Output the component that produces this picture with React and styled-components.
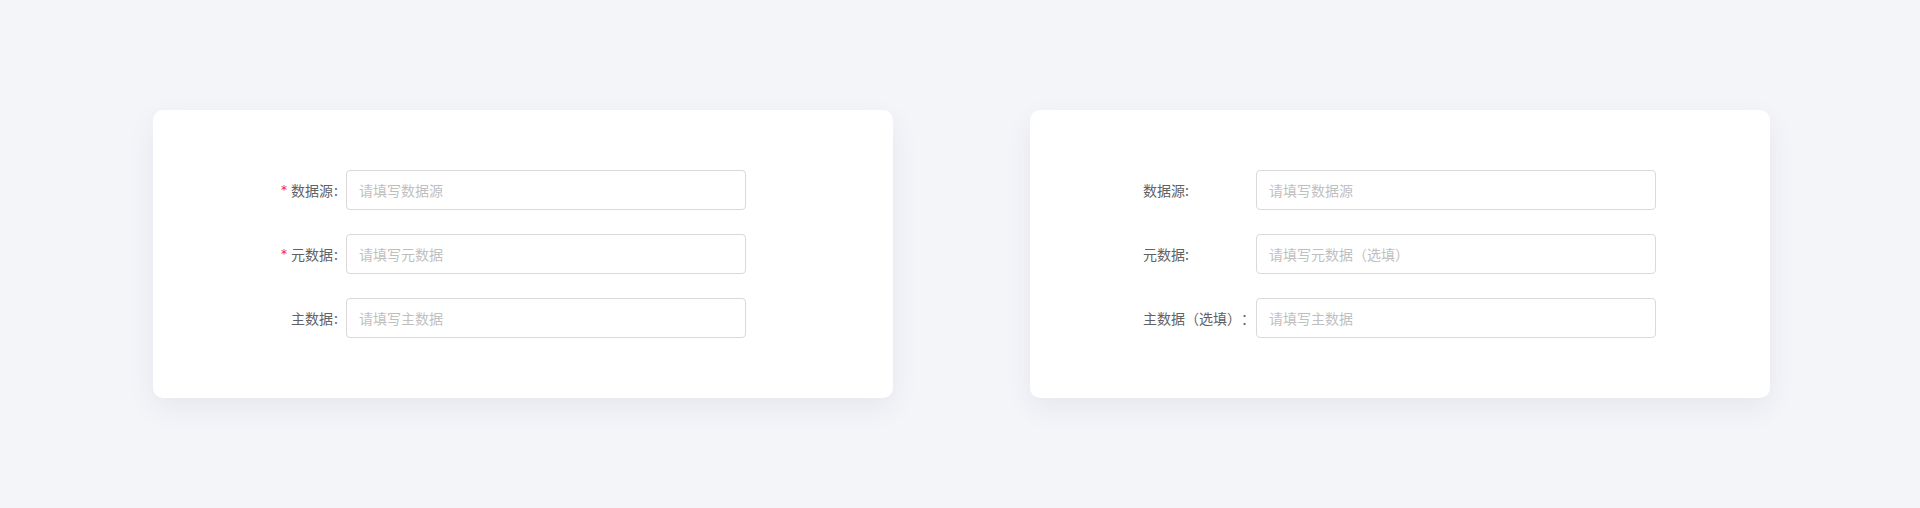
import React from 'react';
import styled, { createGlobalStyle } from 'styled-components';

const GlobalStyle = createGlobalStyle`
  html, body {
    margin: 0;
    padding: 0;
    background: #f4f5f9;
    font-family: "Noto Sans CJK SC", "Noto Sans", sans-serif;
    text-spacing-trim: space-all;
  }
`;

const Page = styled.div`
  height: 508px;
  padding-left: 3px;
  box-sizing: border-box;
  display: flex;
  align-items: center;
  justify-content: center;
  gap: 137px;
`;

const Card = styled.div`
  box-sizing: border-box;
  width: 740px;
  height: 288px;
  padding: 60px 114px 0 113px;
  background: #fff;
  border-radius: 10px;
  box-shadow: 0 10px 28px rgba(40, 50, 90, 0.07);
  display: flex;
  flex-direction: column;
  gap: 24px;
`;

const Row = styled.div`
  display: flex;
  align-items: center;
  height: 40px;
`;

const Label = styled.label`
  flex: 0 0 ${(p) => p.width}px;
  display: flex;
  align-items: center;
  justify-content: ${(p) => (p.align === 'right' ? 'flex-end' : 'flex-start')};
  padding-right: ${(p) => (p.align === 'right' ? '8px' : '0')};
  box-sizing: border-box;
  font-size: 14px;
  color: #606266;
  white-space: nowrap;
  text-spacing-trim: space-all;
`;

const Star = styled.span`
  color: #f5222d;
  margin-right: 4px;
  font-family: "DejaVu Sans", sans-serif;
  font-size: 12px;
  line-height: 1;
`;

const Colon = styled.span`
  margin-left: 1px;
`;

const Input = styled.input`
  box-sizing: border-box;
  width: 400px;
  height: 40px;
  padding: 0 12px;
  border: 1px solid #d9d9d9;
  border-radius: 4px;
  background: #fff;
  font-family: "Noto Sans CJK SC", "Noto Sans", sans-serif;
  font-size: 14px;
  color: #333;
  outline: none;
  text-spacing-trim: space-all;

  &::placeholder {
    color: #bfbfbf;
  }
`;

const leftRows = [
  { label: '数据源', placeholder: '请填写数据源', required: true },
  { label: '元数据', placeholder: '请填写元数据', required: true },
  { label: '主数据', placeholder: '请填写主数据' },
];

const rightRows = [
  { label: '数据源:', placeholder: '请填写数据源' },
  { label: '元数据:', placeholder: '请填写元数据（选填）' },
  { label: '主数据（选填）：', placeholder: '请填写主数据' },
];

const App = () => {
  return (
    <>
      <GlobalStyle />
      <Page>
        <Card>
          {leftRows.map((r) => (
            <Row key={r.label}>
              <Label width={80} align="right">
                {r.required && <Star>*</Star>}
                {r.label}
                <Colon>:</Colon>
              </Label>
              <Input placeholder={r.placeholder} />
            </Row>
          ))}
        </Card>
        <Card>
          {rightRows.map((r) => (
            <Row key={r.label}>
              <Label width={113} align="left">
                {r.label}
              </Label>
              <Input placeholder={r.placeholder} />
            </Row>
          ))}
        </Card>
      </Page>
    </>
  );
};

export default App;
